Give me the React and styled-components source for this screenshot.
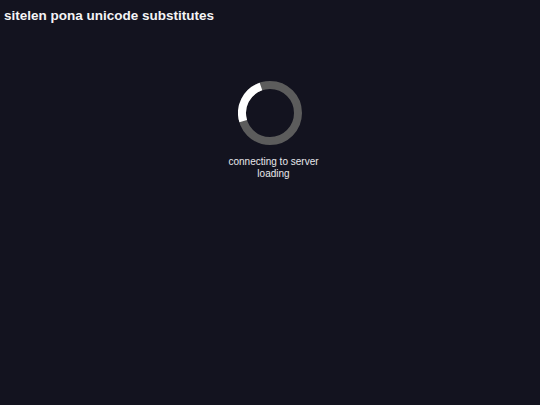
import styled, { createGlobalStyle } from 'styled-components'

const GlobalStyle = createGlobalStyle`
  html, body {
    margin: 0;
    padding: 0;
    background: #13131f;
    height: 100%;
  }
  body {
    font-family: "Liberation Sans", Arial, sans-serif;
    color: #ffffff;
  }
`

const Page = styled.div`
  min-height: 405px;
  background: #13131f;
  padding: 8px 4px;
  box-sizing: border-box;
`

const Title = styled.h1`
  margin: 0;
  font-size: 13.5px;
  font-weight: 700;
  line-height: 16px;
  color: #f4f4f6;
`

const Loader = styled.div`
  display: flex;
  flex-direction: column;
  align-items: center;
  margin-top: 57px;
`

const Spinner = styled.svg`
  width: 64px;
  height: 64px;
  display: block;
`

const Status = styled.div`
  margin-top: 11px;
  padding-left: 7px;
  font-size: 10px;
  line-height: 12px;
  text-align: center;
  color: #e8e8ec;
`

const R = 28
const C = 2 * Math.PI * R

function App() {
  const arc = (88 / 360) * C
  return (
    <Page>
      <GlobalStyle />
      <Title>sitelen pona unicode substitutes</Title>
      <Loader>
        <Spinner viewBox="0 0 64 64">
          <circle cx="32" cy="32" r={R} fill="none" stroke="#5c5c5c" strokeWidth="8" />
          <circle
            cx="32"
            cy="32"
            r={R}
            fill="none"
            stroke="#ffffff"
            strokeWidth="8"
            strokeDasharray={`${arc} ${C}`}
            transform="rotate(163 32 32)"
          />
        </Spinner>
        <Status>
          connecting to server
          <br />
          loading
        </Status>
      </Loader>
    </Page>
  )
}

export default App
